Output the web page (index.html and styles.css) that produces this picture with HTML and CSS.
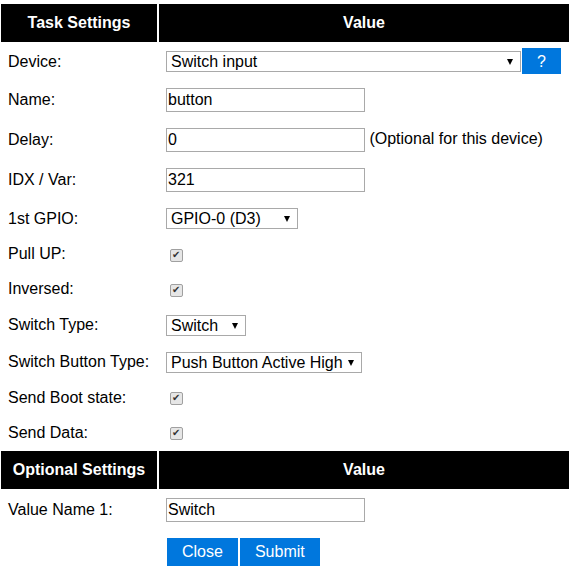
FILE: index.html
```html
<!DOCTYPE html>
<html>
<head>
<meta charset="utf-8">
<title>Task Settings</title>
<link rel="stylesheet" href="styles.css">
</head>
<body>
<form>
<table class="normal">
<tr><th class="col-label">Task Settings</th><th>Value</th></tr>
<tr><td>Device:</td><td><span class="sel sel-device"><select><option>Switch input</option></select></span><a class="button help" href="#">?</a></td></tr>
<tr><td>Name:</td><td><input class="txt" type="text" value="button"></td></tr>
<tr><td>Delay:</td><td><input class="txt" type="text" value="0"> (Optional for this device)</td></tr>
<tr><td>IDX / Var:</td><td><input class="txt" type="text" value="321"></td></tr>
<tr><td>1st GPIO:</td><td><span class="sel sel-gpio"><select><option>GPIO-0 (D3)</option></select></span></td></tr>
<tr><td>Pull UP:</td><td><input class="chk" type="checkbox" checked></td></tr>
<tr><td>Inversed:</td><td><input class="chk" type="checkbox" checked></td></tr>
<tr><td>Switch Type:</td><td><span class="sel sel-type"><select><option>Switch</option></select></span></td></tr>
<tr><td>Switch Button Type:</td><td><span class="sel sel-btn"><select><option>Push Button Active High</option></select></span></td></tr>
<tr><td>Send Boot state:</td><td><input class="chk" type="checkbox" checked></td></tr>
<tr><td>Send Data:</td><td><input class="chk" type="checkbox" checked></td></tr>
<tr><th class="col-label">Optional Settings</th><th>Value</th></tr>
<tr><td>Value Name 1:</td><td><input class="txt" type="text" value="Switch"></td></tr>
<tr><td></td><td class="actions"><button class="button act" type="button">Close</button><button class="button act" type="button">Submit</button></td></tr>
</table>
</form>
</body>
</html>
```
FILE: styles.css
```css
html, body {
  margin: 0;
  padding: 0;
  background: #fff;
}
body {
  font-family: "Liberation Sans", Arial, sans-serif;
  font-size: 16px;
  color: #000;
}
form {
  margin: 0;
}
table.normal {
  border-collapse: separate;
  border-spacing: 2px;
  margin: 2px 0 0 -1px;
  width: 572px;
}
table.normal th {
  background: #000;
  color: #fff;
  font-weight: bold;
  padding: 10px;
  text-align: center;
}
table.normal th.col-label {
  width: 136px;
}
table.normal td {
  padding: 7px;
  vertical-align: middle;
  text-align: left;
  white-space: nowrap;
}
.txt {
  box-sizing: border-box;
  width: 199px;
  height: 24px;
  border: 1px solid #a9a9a9;
  padding: 0 1px;
  margin: 0;
  font-family: "Liberation Sans", Arial, sans-serif;
  font-size: 16px;
  color: #000;
  vertical-align: middle;
}
.sel {
  display: inline-block;
  position: relative;
  vertical-align: middle;
}
.sel select {
  -webkit-appearance: none;
  appearance: none;
  box-sizing: border-box;
  height: 21px;
  border: 1px solid #a9a9a9;
  border-radius: 0;
  background: #fff;
  padding: 0 18px 0 4px;
  margin: 0;
  font-family: "Liberation Sans", Arial, sans-serif;
  font-size: 16px;
  color: #000;
  display: block;
}
.sel::after {
  content: "";
  position: absolute;
  right: 8px;
  top: 8px;
  border-left: 3.5px solid transparent;
  border-right: 3.5px solid transparent;
  border-top: 6px solid #000;
  pointer-events: none;
}
.sel-device select { width: 355px; }
.sel-gpio select { width: 132px; }
.sel-type select { width: 80px; }
.sel-btn select { width: 196px; }
.button {
  background: #07d;
  color: #fff;
  text-decoration: none;
  font-family: "Liberation Sans", Arial, sans-serif;
  font-size: 16px;
}
.help {
  padding: 4.5px 15px;
  margin-left: 1px;
  vertical-align: middle;
}
.act {
  display: inline-block;
  border: none;
  border-radius: 0;
  padding: 5px 15px;
  margin: 0 2px 0 0;
  line-height: 18px;
  cursor: pointer;
}
table.normal td.actions {
  padding-left: 8px;
}
.chk {
  -webkit-appearance: none;
  appearance: none;
  box-sizing: border-box;
  width: 13px;
  height: 13px;
  margin: 3px 3px 2px 4px;
  border: 1px solid #a0a0a0;
  border-radius: 2px;
  background: #e6e6e6;
  position: relative;
  vertical-align: middle;
}
.chk::after {
  content: "\2714";
  position: absolute;
  left: 1px;
  top: -1px;
  font-family: "DejaVu Sans", sans-serif;
  font-size: 10px;
  line-height: 12px;
  color: #333;
}
```
